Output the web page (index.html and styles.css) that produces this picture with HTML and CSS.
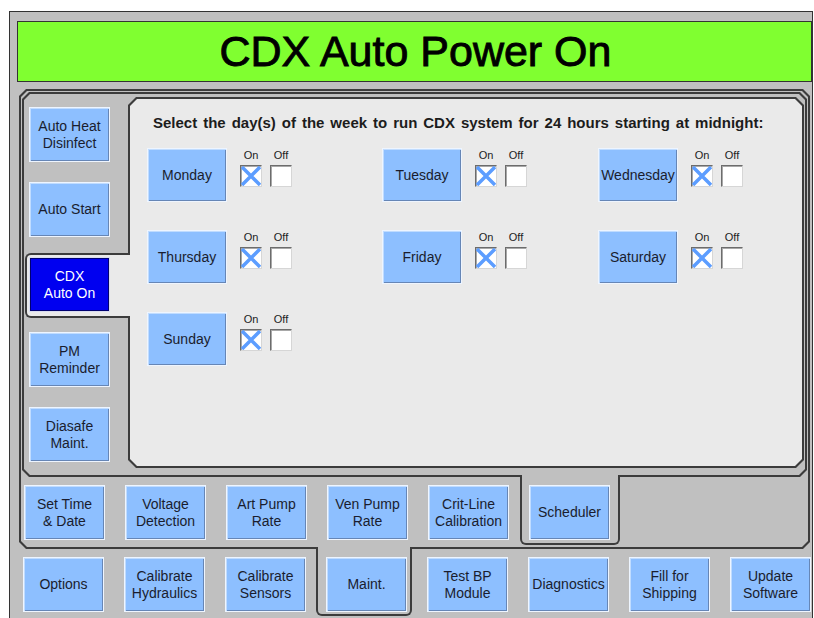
FILE: index.html
```html
<!DOCTYPE html>
<html lang="en">
<head>
    <meta charset="UTF-8">
    <meta name="viewport" content="width=device-width, initial-scale=1.0">
    <title>CDX Auto Power On</title>
    <link rel="stylesheet" href="styles.css">
</head>
<body>
    <div class="frame">
        <header class="title-bar">
            <h1>CDX Auto Power On</h1>
        </header>

        <!-- Maint. panel -->
        <div class="edge edge-outer">
            <div class="fill fill-outer">

                <!-- Scheduler panel -->
                <div class="edge edge-mid">
                    <div class="fill fill-mid">
                        <nav class="side-tabs">
                            <button class="btn">Auto Heat<br>Disinfect</button>
                            <button class="btn">Auto Start</button>
                            <div class="tab tab-side">
                                <button class="btn btn-on">CDX<br>Auto On</button>
                            </div>
                            <button class="btn">PM<br>Reminder</button>
                            <button class="btn">Diasafe<br>Maint.</button>
                        </nav>

                        <div class="edge edge-inner">
                            <section class="fill fill-inner">
                                <p class="prompt">Select the day(s) of the week to run CDX system for 24 hours starting at midnight:</p>
                                <div class="days">
                                    <div class="day">
                                        <button class="btn btn-day">Monday</button>
                                        <div class="checks">
                                            <div class="check"><span>On</span><span class="box"><svg viewBox="0 0 20 20"><path d="M1 1L19 19M19 1L1 19"/></svg></span></div>
                                            <div class="check"><span>Off</span><span class="box"></span></div>
                                        </div>
                                    </div>
                                    <div class="day">
                                        <button class="btn btn-day">Tuesday</button>
                                        <div class="checks">
                                            <div class="check"><span>On</span><span class="box"><svg viewBox="0 0 20 20"><path d="M1 1L19 19M19 1L1 19"/></svg></span></div>
                                            <div class="check"><span>Off</span><span class="box"></span></div>
                                        </div>
                                    </div>
                                    <div class="day">
                                        <button class="btn btn-day">Wednesday</button>
                                        <div class="checks">
                                            <div class="check"><span>On</span><span class="box"><svg viewBox="0 0 20 20"><path d="M1 1L19 19M19 1L1 19"/></svg></span></div>
                                            <div class="check"><span>Off</span><span class="box"></span></div>
                                        </div>
                                    </div>
                                    <div class="day">
                                        <button class="btn btn-day">Thursday</button>
                                        <div class="checks">
                                            <div class="check"><span>On</span><span class="box"><svg viewBox="0 0 20 20"><path d="M1 1L19 19M19 1L1 19"/></svg></span></div>
                                            <div class="check"><span>Off</span><span class="box"></span></div>
                                        </div>
                                    </div>
                                    <div class="day">
                                        <button class="btn btn-day">Friday</button>
                                        <div class="checks">
                                            <div class="check"><span>On</span><span class="box"><svg viewBox="0 0 20 20"><path d="M1 1L19 19M19 1L1 19"/></svg></span></div>
                                            <div class="check"><span>Off</span><span class="box"></span></div>
                                        </div>
                                    </div>
                                    <div class="day">
                                        <button class="btn btn-day">Saturday</button>
                                        <div class="checks">
                                            <div class="check"><span>On</span><span class="box"><svg viewBox="0 0 20 20"><path d="M1 1L19 19M19 1L1 19"/></svg></span></div>
                                            <div class="check"><span>Off</span><span class="box"></span></div>
                                        </div>
                                    </div>
                                    <div class="day">
                                        <button class="btn btn-day">Sunday</button>
                                        <div class="checks">
                                            <div class="check"><span>On</span><span class="box"><svg viewBox="0 0 20 20"><path d="M1 1L19 19M19 1L1 19"/></svg></span></div>
                                            <div class="check"><span>Off</span><span class="box"></span></div>
                                        </div>
                                    </div>
                                </div>
                            </section>
                        </div>
                    </div>
                </div>

                <!-- second row of tabs -->
                <div class="row row-mid">
                    <button class="btn">Set Time<br>&amp; Date</button>
                    <button class="btn">Voltage<br>Detection</button>
                    <button class="btn">Art Pump<br>Rate</button>
                    <button class="btn">Ven Pump<br>Rate</button>
                    <button class="btn">Crit-Line<br>Calibration</button>
                    <div class="tab tab-bottom tab-sched">
                        <button class="btn">Scheduler</button>
                    </div>
                </div>
            </div>
        </div>

        <!-- first row of tabs -->
        <div class="row row-top">
            <button class="btn">Options</button>
            <button class="btn">Calibrate<br>Hydraulics</button>
            <button class="btn">Calibrate<br>Sensors</button>
            <div class="tab tab-bottom tab-maint">
                <button class="btn">Maint.</button>
            </div>
            <button class="btn">Test BP<br>Module</button>
            <button class="btn">Diagnostics</button>
            <button class="btn">Fill for<br>Shipping</button>
            <button class="btn">Update<br>Software</button>
        </div>
    </div>
</body>
</html>
```

FILE: styles.css
```css
/* General */
* {
    box-sizing: border-box;
}

body {
    margin: 0;
    background-color: #fff;
    font-family: "Liberation Sans", Arial, sans-serif;
    overflow: hidden;
}

.frame {
    margin: 11px 0 0 9px;
    width: 804px;
    height: 620px;
    border: 1px solid #333;
    border-bottom: none;
    background-color: #c0c0c0;
    padding: 9px 0 0 7px;
}

.title-bar {
    height: 61px;
    border: 1px solid #333;
    background-color: #80ff30;
    display: flex;
    align-items: center;
    justify-content: center;
}

.title-bar h1 {
    margin: 0 0 0 2px;
    font-size: 43px;
    font-weight: normal;
    color: #000;
    -webkit-text-stroke: 0.9px #000;
}

/* Panels with cut corners */
.edge {
    --c: 7px;
    background-color: #3c3c3c;
    padding: 2px;
    clip-path: polygon(var(--c) 0, calc(100% - var(--c)) 0, 100% var(--c), 100% calc(100% - var(--c)), calc(100% - var(--c)) 100%, var(--c) 100%, 0 calc(100% - var(--c)), 0 var(--c));
}

.fill {
    --c: 6px;
    background-color: #c0c0c0;
    clip-path: polygon(var(--c) 0, calc(100% - var(--c)) 0, 100% var(--c), 100% calc(100% - var(--c)), calc(100% - var(--c)) 100%, var(--c) 100%, 0 calc(100% - var(--c)), 0 var(--c));
}

.edge-outer {
    margin: 7px 0 0 2px;
    width: 791px;
}

.fill-outer {
    padding: 1px 1px 0 1px;
}

.fill-mid {
    display: flex;
    align-items: flex-start;
    padding: 3px 1px 7px 0;
}

.edge-inner {
    --c: 8px;
    flex: 1;
    height: 371px;
}

.fill-inner {
    --c: 7px;
    height: 100%;
    background-color: #eaeaea;
    padding: 15px 0 0 17px;
}

/* Buttons */
.btn {
    margin: 0;
    padding: 0;
    width: 81px;
    height: 55px;
    font-family: inherit;
    font-size: 14px;
    line-height: 17px;
    color: #1a1d2e;
    text-align: center;
    background-color: #8dbfff;
    border: 1px solid #eef5ff;
    box-shadow: inset 1px 1px 0 #c0dcff, inset -1px -1px 0 #6686b6;
}

.btn-on {
    background-color: #0000f0;
    color: #fff;
    border-color: #d8dcf0;
    box-shadow: inset 0 0 0 1px #000070;
}

/* Tabs */
.tab {
    position: relative;
    z-index: 1;
    border: 2px solid #3c3c3c;
}

.side-tabs {
    width: 104px;
    flex: none;
    display: flex;
    flex-direction: column;
    align-items: flex-start;
    gap: 20px;
    padding: 10px 0 0 1px;
}

.side-tabs > .btn {
    margin-left: 4px;
}

.tab-side {
    width: 105px;
    margin: -4px 0 -6px 0;
    padding: 2px 0 4px 2px;
    border-right: none;
    border-radius: 6px 0 0 6px;
    background-color: #eaeaea;
}

.tab-bottom {
    border-top: none;
    border-radius: 0 0 6px 6px;
    background-color: #c0c0c0;
}

.row {
    display: flex;
    align-items: flex-start;
    gap: 20px;
}

.row-mid {
    padding: 8px 0 2px 2px;
}

.tab-sched {
    margin: -10px 0 0 -9px;
    padding: 10px 8px 3px 7px;
}

.row-top {
    padding: 8px 0 0 6px;
}

.tab-maint {
    margin: -10px -5px 0 -10px;
    padding: 10px 3px 2px 8px;
}

/* Day selection */
.prompt {
    margin: 0 0 17px 6px;
    font-size: 15px;
    line-height: 17px;
    font-weight: bold;
    word-spacing: 1.8px;
    color: #1c1c1c;
}

.days {
    display: grid;
    grid-template-columns: 235px 216px auto;
    row-gap: 28px;
}

.day {
    display: flex;
    align-items: flex-start;
}

.btn-day {
    width: 80px;
    height: 54px;
}

.checks {
    display: flex;
    gap: 8px;
    margin: 1px 0 0 13px;
}

.check {
    display: flex;
    flex-direction: column;
    align-items: center;
    gap: 3px;
    width: 22px;
    font-size: 11px;
    line-height: 13px;
    color: #222;
}

.box {
    display: block;
    width: 22px;
    height: 22px;
    background-color: #fff;
    border: 1px solid;
    border-color: #6c6c6c #d6d6d6 #d6d6d6 #6c6c6c;
    box-shadow: inset 1px 1px 0 #a8a8a8;
}

.box svg {
    display: block;
    width: 20px;
    height: 20px;
}

.box path {
    stroke: #5c9dff;
    stroke-width: 3.5;
    fill: none;
}
```
